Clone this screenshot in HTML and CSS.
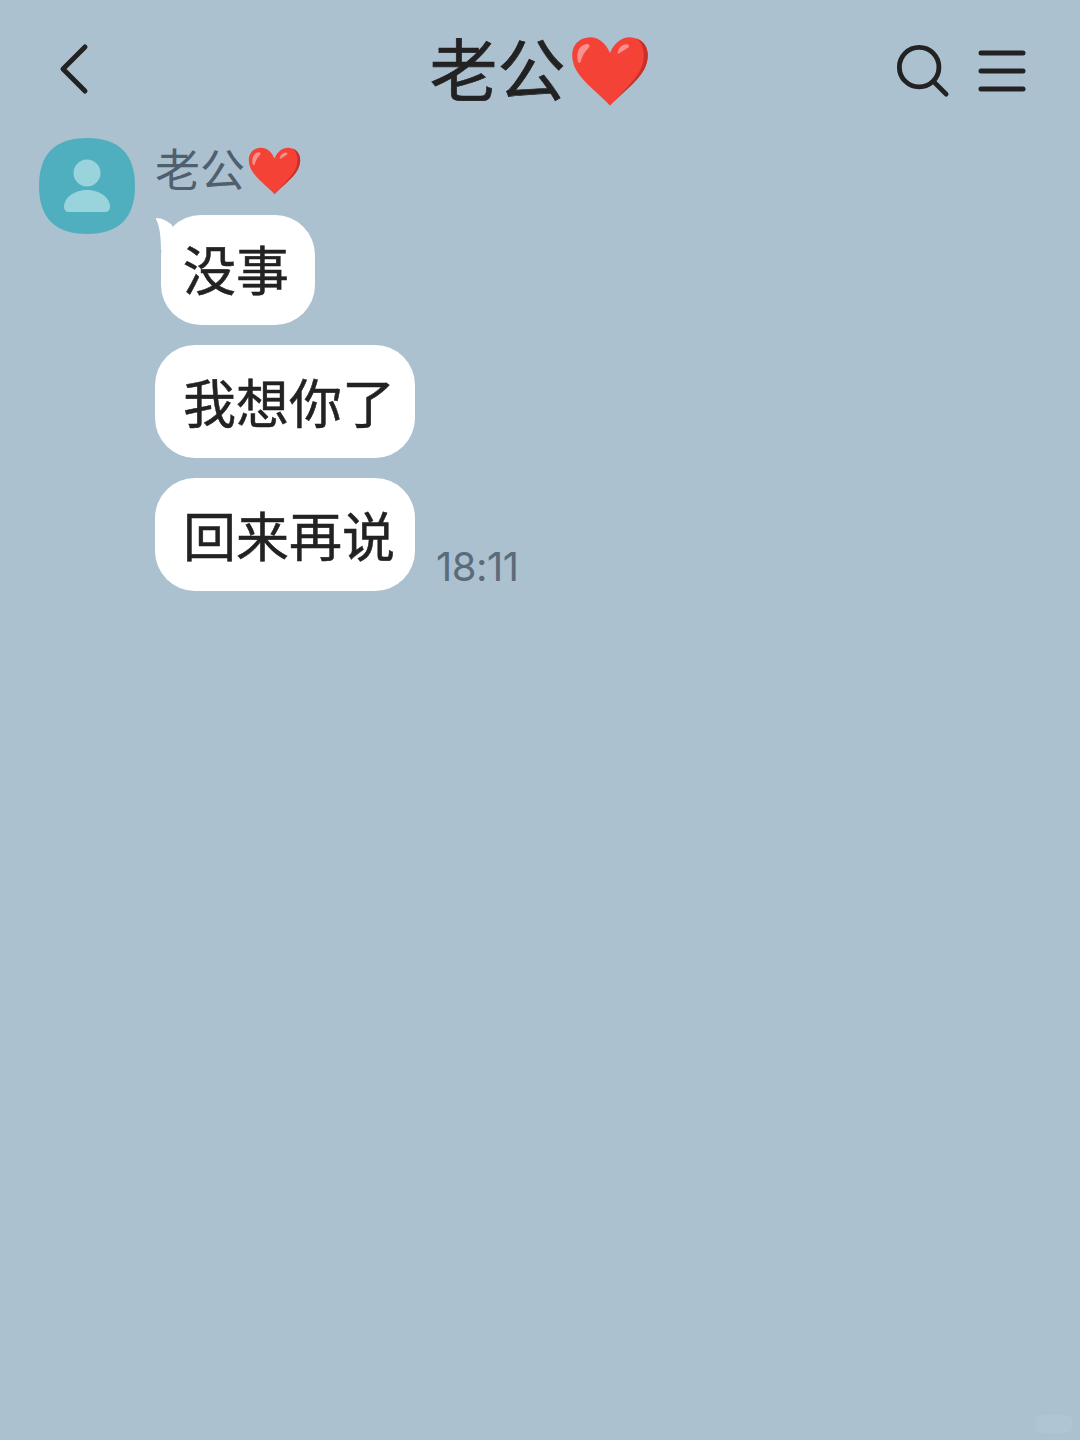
FILE: index.html
```html
<!DOCTYPE html>
<html lang="zh-CN">
<head>
  <meta charset="UTF-8">
  <meta name="viewport" content="width=device-width, initial-scale=1.0">
  <title>老公</title>
  <link rel="stylesheet" href="styles.css">
</head>
<body>
  <svg class="defs" width="0" height="0" aria-hidden="true">
    <defs>
      <symbol id="heart" viewBox="0 0 80 72">
        <path fill="#f44336" d="M40 71C30 60 12 47 5 34C-2 20 1 7 12 2.5C23-2 34 3 40 17C46 3 57-2 68 2.5C79 7 82 20 75 34C68 47 50 60 40 71Z"/>
        <path fill="#c9302b" d="M68 2.5C79 7 82 20 75 34C68 47 50 60 40 71C52 57 68 44 73 30C76 20 75 9 68 2.5Z"/>
        <path fill="#f8918c" d="M7 25C5 16 9 9 15 8C19 7 20 10 18 12C15 15 12 19 10 26C9 28 7 27 7 25Z"/>
        <path fill="#f8918c" d="M48 16C49 11 53 8 57 8C60 8 60 11 58 12C55 14 53 15 50 17C48 18 47 17 48 16Z"/>
      </symbol>
    </defs>
  </svg>

  <header class="topbar">
    <div class="topbar-left">
      <svg class="back-icon" viewBox="0 0 32 52" aria-label="返回">
        <path d="M27 4L5 26L27 48"/>
      </svg>
    </div>
    <h1 class="title">老公<svg class="title-heart"><use href="#heart"/></svg></h1>
    <div class="topbar-right">
      <svg class="search-icon" viewBox="0 0 56 56" aria-label="搜索">
        <circle cx="24" cy="24" r="20.5"/>
        <path d="M39 39L52 52"/>
      </svg>
      <svg class="menu-icon" viewBox="0 0 48 44" aria-label="菜单">
        <path d="M3 4H45M3 22H45M3 40H45"/>
      </svg>
    </div>
  </header>

  <main class="chat">
    <svg class="avatar" viewBox="0 0 96 96" aria-hidden="true">
      <path fill="#4fafbf" d="M48 0C80 0 96 16 96 48C96 80 80 96 48 96C16 96 0 80 0 48C0 16 16 0 48 0Z"/>
      <circle fill="#99d3dc" cx="48" cy="35" r="13.5"/>
      <path fill="#99d3dc" d="M25 69C25 59 36 52 48 52C60 52 71 59 71 69C71 72 69 74 66 74H30C27 74 25 72 25 69Z"/>
    </svg>
    <div class="messages">
      <div class="sender">老公<svg class="sender-heart"><use href="#heart"/></svg></div>
      <div class="bubble first">
        <svg class="tail" viewBox="0 0 20 32" aria-hidden="true">
          <path d="M0.5 0C6 0 11 3 16 7L20 32L5 32C5 17 3 6 0 1.5Z"/>
        </svg>
        没事
      </div>
      <div class="bubble wide">我想你了</div>
      <div class="last-row">
        <div class="bubble wide">回来再说</div>
        <span class="time">18:11</span>
      </div>
    </div>
  </main>

  <div class="watermark"></div>
</body>
</html>
```

FILE: styles.css
```css
body {
  margin: 0;
  width: 1080px;
  height: 1440px;
  overflow: hidden;
  position: relative;
  background-color: #abc1d0;
  font-family: "Noto Sans CJK SC", "Noto Sans", sans-serif;
}

.defs {
  position: absolute;
}

.topbar {
  display: grid;
  grid-template-columns: 1fr auto 1fr;
  align-items: center;
  height: 138px;
  padding: 0 54px 0 52px;
  box-sizing: border-box;
}

.topbar-left {
  display: flex;
}

.back-icon {
  width: 32px;
  height: 52px;
  margin-left: 6px;
  fill: none;
  stroke: #222;
  stroke-width: 5;
  stroke-linecap: round;
  stroke-linejoin: round;
}

.title {
  display: flex;
  align-items: center;
  margin: 0 0 5px;
  color: #222;
  font-size: 68px;
  font-weight: 400;
  -webkit-text-stroke: 0.7px #222;
  line-height: 80px;
}

.title-heart {
  width: 78px;
  height: 71px;
  margin: 9px 0 0 5px;
}

.topbar-right {
  display: flex;
  justify-content: flex-end;
  align-items: center;
  gap: 28px;
}

.search-icon {
  width: 54px;
  height: 54px;
  margin-top: 4px;
  fill: none;
  stroke: #222;
  stroke-width: 5;
  stroke-linecap: round;
}

.menu-icon {
  width: 48px;
  height: 44px;
  margin-top: 4px;
  fill: none;
  stroke: #222;
  stroke-width: 5;
  stroke-linecap: round;
}

.chat {
  display: flex;
  gap: 20px;
  padding-left: 39px;
}

.avatar {
  width: 96px;
  height: 96px;
  flex-shrink: 0;
}

.messages {
  display: flex;
  flex-direction: column;
  align-items: flex-start;
  gap: 20px;
}

.sender {
  display: flex;
  align-items: center;
  box-sizing: border-box;
  height: 57px;
  padding-top: 2px;
  color: #4f5f6d;
  font-size: 45px;
  line-height: 53px;
}

.sender-heart {
  width: 53px;
  height: 48px;
  margin: 6px 0 0 3px;
}

.bubble {
  position: relative;
  box-sizing: border-box;
  background-color: #fff;
  border-radius: 40px;
  color: #222;
  font-size: 53px;
  -webkit-text-stroke: 0.5px #222;
  line-height: 112px;
  height: 113px;
  white-space: nowrap;
}

.bubble.first {
  width: 154px;
  height: 110px;
  margin-left: 6px;
  padding-left: 22px;
  line-height: 106px;
}

.bubble.wide {
  width: 260px;
  padding-left: 28px;
}

.tail {
  position: absolute;
  left: -5px;
  top: 3px;
  width: 20px;
  height: 32px;
  fill: #fff;
}

.last-row {
  display: flex;
  align-items: flex-end;
  gap: 21px;
}

.time {
  color: #5b6b7a;
  font-family: "Inter", sans-serif;
  font-size: 40px;
  font-weight: 400;
  letter-spacing: -0.5px;
  line-height: 48px;
}

.watermark {
  position: absolute;
  right: 8px;
  bottom: 7px;
  width: 36px;
  height: 18px;
  border-radius: 6px;
  background-color: rgba(255, 255, 255, 0.07);
}
```
